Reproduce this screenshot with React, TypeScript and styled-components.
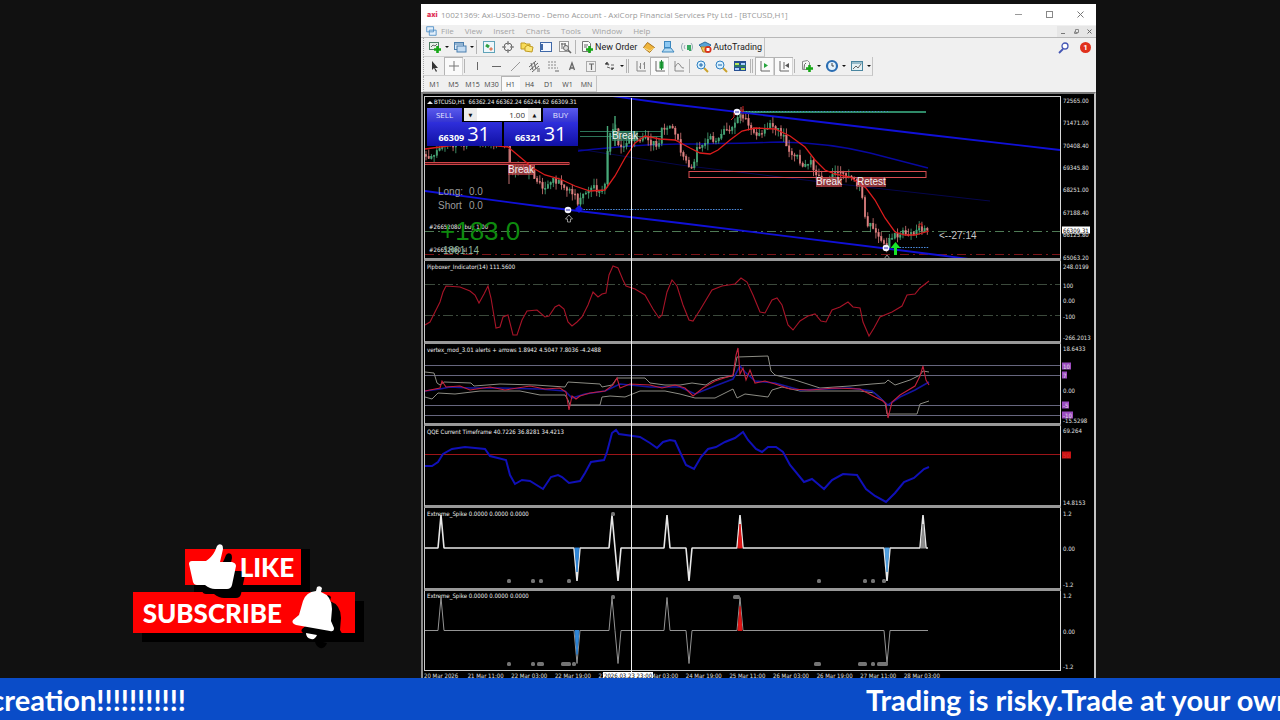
import React, { ReactNode } from "react";
import styled, { createGlobalStyle, css } from "styled-components";

const GlobalStyle = createGlobalStyle`
  *, *::before, *::after { box-sizing: border-box; }
  body { margin: 0; background: #111111; font-family: "Open Sans", "Noto Sans", sans-serif; }
  button { border: 0; padding: 0; background: none; font: inherit; color: inherit; }
`;

/* ---------- page ---------- */

const Page = styled.div`
  display: flex;
  flex-direction: column;
  height: 100vh;
  min-height: 600px;
  overflow: hidden;
`;

const Stage = styled.main`
  flex: 1;
  min-height: 0;
  display: grid;
  grid-template-columns: 421fr 675fr 184fr;
  padding-top: 4px;
`;

const Side = styled.aside`
  display: flex;
  align-items: flex-end;
  justify-content: flex-end;
  padding: 0 66px 45px 0;
  min-width: 0;
`;

const Terminal = styled.section`
  display: flex;
  flex-direction: column;
  min-width: 0;
  min-height: 0;
  background: #f0f0f0;
  color: #222222;
`;

/* ---------- call to action ---------- */

const Promo = styled.div`
  display: flex;
  flex-direction: column;
  align-items: flex-start;
  gap: 7px;
`;

const PromoButton = styled.button<{ $kind: "like" | "subscribe" }>`
  display: flex;
  align-items: center;
  background: #ff0000;
  color: #ffffff;
  box-shadow: 9px 9px 0 #000000;
  font: 900 26px/36px Lato, sans-serif;
  ${(p) =>
    p.$kind === "like"
      ? css`
          position: relative;
          z-index: 1;
          height: 36px;
          margin-left: 52px;
          padding: 0 7px 0 4px;
          gap: 3px;
          box-shadow: 9px 0 0 #000000, 9px 7px 0 #000000;
        `
      : css`
          height: 41px;
          padding: 0 19px 0 10px;
          gap: 10px;
        `}
  svg { flex: none; overflow: visible; }
`;

/* ---------- window chrome ---------- */

const TitleBar = styled.header`
  display: flex;
  align-items: center;
  height: 21px;
  padding: 0 2px 0 6px;
  gap: 4px;
  background: #ffffff;
  color: #9a9a9a;
  font-size: 8px;
  white-space: nowrap;
`;

const Brand = styled.span`
  color: #e0355a;
  font: 900 7px/8px Inter, sans-serif;
  width: 10px;
`;

const Title = styled.h1`
  margin: 0;
  flex: 1;
  font: 400 8px/12px "Open Sans", sans-serif;
`;

const WindowButton = styled.button<{ $small?: boolean }>`
  display: grid;
  place-items: center;
  width: ${(p) => (p.$small ? 13 : 27)}px;
  height: ${(p) => (p.$small ? 11 : 20)}px;
  color: #777777;
  background: ${(p) => (p.$small ? "#e6e6e6" : "none")};
`;

const MenuBar = styled.nav`
  display: flex;
  align-items: center;
  height: 13px;
  padding-left: 4px;
  border-bottom: 1px solid #b8b8b8;
  color: #a4a4a4;
  font-size: 8px;
  line-height: 12px;
`;

const MenuItem = styled.button`
  margin-left: 4px;
  margin-right: 7px;
`;

const Spacer = styled.span`
  flex: 1;
`;

const Toolbar = styled.div<{ $height: number }>`
  display: flex;
  align-items: stretch;
  height: ${(p) => p.$height}px;
  padding-left: 2px;
`;

const Strip = styled.div`
  display: flex;
  align-items: center;
  padding-left: 1px;
  border-left: 1px dotted #a8a8a8;
  border-right: 1px solid #c4c4c4;
  border-bottom: 1px solid #cfcfcf;
`;

const Tool = styled.button<{ $active?: boolean; $label?: boolean }>`
  display: flex;
  align-items: center;
  justify-content: center;
  flex: none;
  height: 100%;
  min-width: 19px;
  padding: ${(p) => (p.$label ? "0 2px" : "0")};
  gap: 1px;
  color: #1c1c1c;
  font: 400 9px/12px Roboto, sans-serif;
  ${(p) =>
    p.$active &&
    css`
      background: #fafafa;
      box-shadow: inset 1px 1px 0 #b4b4b4, inset -1px 0 0 #d4d4d4;
    `}
`;

const Caret = styled.button`
  width: 6px;
  height: 100%;
  display: grid;
  place-items: center;
  &::after {
    content: "";
    border: 2px solid transparent;
    border-top-color: #111111;
    border-bottom: 0;
  }
`;

const Divider = styled.span<{ $double?: boolean }>`
  width: ${(p) => (p.$double ? 3 : 1)}px;
  height: 14px;
  margin: 0 2px 0 1px;
  border-left: 1px solid #b4b4b4;
  border-right: ${(p) => (p.$double ? "1px solid #b4b4b4" : "0")};
`;

const Frame = styled.button<{ $active?: boolean }>`
  width: 19px;
  height: 100%;
  padding-top: 2px;
  font: 400 7px/8px "Open Sans", sans-serif;
  color: #444444;
  ${(p) =>
    p.$active &&
    css`
      background: #fafafa;
      box-shadow: inset 1px 1px 0 #b4b4b4;
    `}
`;

const Alerts = styled.button`
  display: grid;
  place-items: center;
  align-self: center;
  width: 11px;
  height: 11px;
  margin: 0 5px 0 7px;
  border-radius: 50%;
  background: #e0301c;
  color: #ffffff;
  font: 700 8px/11px Roboto, sans-serif;
`;

/* ---------- charts ---------- */

const Charts = styled.div`
  position: relative;
  flex: 1;
  min-height: 0;
  display: flex;
  flex-direction: column;
  padding: 2px 0 0 1px;
  border: solid #8c8c8c;
  border-width: 2px 2px 0 2px;
  border-top-color: #7a7a7a;
  border-right-color: #c4c4c4;
  background: #000000;
  color: #f0f0f0;
  font: 400 6px/8px "DejaVu Sans Condensed", "Noto Sans", sans-serif;
  overflow: hidden;
`;

const Panel = styled.section<{ $h: number; $first?: boolean }>`
  flex: ${(p) => `${p.$h} 1 ${p.$h}px`};
  min-height: 0;
  display: grid;
  grid-template-columns: 1fr 33px;
  &:not(:last-of-type) > :first-child { border-bottom: 3px solid #989898; }
  &:last-of-type > :first-child { border-bottom: 1px solid #c8c8c8; }
  &:first-of-type > :first-child { border-top: 1px solid #c8c8c8; }
`;

const Plot = styled.div`
  position: relative;
  border-left: 1px solid #c8c8c8;
  border-right: 1px solid #d8d8d8;
  overflow: hidden;
`;

const Canvas = styled.svg`
  position: absolute;
  inset: 0;
  width: 100%;
  height: 100%;
`;

const Scale = styled.div`
  position: relative;
`;

const ScaleMark = styled.span<{ $bg?: string; $color?: string }>`
  position: absolute;
  left: 1px;
  padding: 0 1px;
  transform: translateY(-50%);
  line-height: 7px;
  white-space: pre;
  background: ${(p) => p.$bg || "none"};
  color: ${(p) => p.$color || "#e0e0e0"};
`;

const Note = styled.span<{ $size?: number; $color?: string; $bg?: string }>`
  position: absolute;
  transform: translateY(-50%);
  white-space: pre;
  color: ${(p) => p.$color || "#f0f0f0"};
  background: ${(p) => p.$bg || "none"};
  ${(p) => p.$size && css`font: 400 ${p.$size}px/${p.$size}px "Liberation Sans", sans-serif;`}
`;

const TimeAxis = styled.div`
  position: relative;
  display: flex;
  flex: none;
  height: 7px;
  margin-right: 33px;
  overflow: hidden;
`;

const TimeMark = styled.span`
  flex: none;
  width: 6.85%;
  padding-top: 1px;
  white-space: nowrap;
  color: #e0e0e0;
`;

const TimeCursor = styled.span`
  position: absolute;
  left: 28.1%;
  top: 1px;
  padding: 0 1px;
  background: #ffffff;
  color: #000000;
`;

const Crosshair = styled.span`
  position: absolute;
  top: 4px;
  bottom: 4px;
  left: calc((100% - 33px) * 0.3255);
  width: 1px;
  background: #f0f0f0;
`;

/* ---------- one-click trade panel ---------- */

const Trade = styled.form`
  position: absolute;
  left: 2px;
  top: 11px;
  width: 151px;
  display: grid;
  grid-template-columns: 1fr 1fr;
  gap: 0 2px;
  background: #000000;
`;

const TradeTop = styled.div`
  grid-column: 1 / -1;
  display: flex;
  gap: 2px;
  height: 14px;
`;

const SideButton = styled.button`
  flex: none;
  width: 35px;
  background: linear-gradient(#5a5aec, #3434d2);
  color: #e6e6ff;
  font: 400 8px/14px "Open Sans", sans-serif;
`;

const Volume = styled.div`
  flex: 1 1 0;
  min-width: 0;
  display: flex;
  height: 13px;
  background: #ffffff;
  input {
    flex: 1 1 0;
    width: 0;
    border: 0;
    padding: 0 3px;
    text-align: right;
    background: none;
    color: #333333;
    font: 400 8px/12px "Open Sans", sans-serif;
  }
  button {
    flex: none;
    width: 13px;
    background: #ececec;
    color: #111111;
    font: 400 5px/12px "DejaVu Sans", sans-serif;
  }
`;

const Quote = styled.button`
  display: flex;
  align-items: baseline;
  justify-content: center;
  gap: 3px;
  height: 24px;
  background: linear-gradient(#2f2fdc, #1010a4);
  color: #ffffff;
  font: 700 9px/24px "Open Sans", sans-serif;
  big { font: 400 20px/24px "Open Sans", sans-serif; }
`;

/* ---------- ticker ---------- */

const Ticker = styled.footer`
  flex: none;
  display: flex;
  justify-content: space-between;
  height: 42px;
  background: #0a4cc8;
  color: #ffffff;
  font: 700 29px/44px Lato, sans-serif;
  white-space: nowrap;
  overflow: hidden;
`;

const TickerText = styled.p<{ $width: string; $end?: boolean }>`
  display: flex;
  justify-content: ${(p) => (p.$end ? "flex-end" : "flex-start")};
  width: ${(p) => p.$width};
  margin: 0;
  overflow: hidden;
`;

/* ---------- toolbar drawings ---------- */

const Icon = ({ children, size = 14 }: { children: ReactNode; size?: number }) => (
  <svg width={size} height={size} viewBox="0 0 14 14" fill="none" stroke="#666" strokeWidth="1" aria-hidden="true">
    {children}
  </svg>
);

const plus = <path d="M9.5 6v7M6 9.5h7" stroke="#16a716" strokeWidth="2.6" />;

const icons: Record<string, ReactNode> = {
  newChart: <><rect x="1.5" y="2.5" width="9" height="7" fill="#e8f1ea" stroke="#4e8064" /><path d="M3 7l2-2 2 1 2-2" />{plus}</>,
  profiles: <><rect x="1.5" y="2.5" width="9" height="7" fill="#dcebf8" stroke="#4b7fae" /><rect x="4" y="6" width="9" height="6" fill="#c4dcf2" stroke="#4b7fae" /><path d="M2 4h8" stroke="#4b7fae" /></>,
  market: <><rect x="1.5" y="1.5" width="11" height="11" fill="#eef7fb" stroke="#5fa3b8" /><path d="M4 5l3 2" stroke="#2fa040" strokeWidth="3" /><path d="M8 8l2 2" stroke="#e08060" strokeWidth="3" /></>,
  target: <><circle cx="7" cy="7" r="4" /><path d="M7 1v4M7 9v4M1 7h4M9 7h4" /></>,
  folders: <><path d="M1 3h4l1 1h4v5H1z" fill="#f8dc58" stroke="#c09a20" /><path d="M5 7l3-2 1 1 4 1-1 5-7-1z" fill="#fbe678" stroke="#c09a20" /></>,
  terminal: <><rect x="1.5" y="2.5" width="11" height="9" fill="#f4f8ff" stroke="#3f68a8" /><path d="M3 4v6" stroke="#3f68a8" strokeWidth="2" /></>,
  tester: <><rect x="1.5" y="1.5" width="9" height="10" fill="#fafafa" stroke="#999" /><path d="M3 4h5M4 3v6M7 3v5" /><circle cx="8" cy="8" r="2.5" fill="#ddd" /><path d="M10 10l3 3" strokeWidth="1.6" /></>,
  order: <><path d="M2.500 1.500h6l2 2v8h-8z" fill="#fafafa" stroke="#777" /><path d="M4 5h4M4 7h3" />{plus}</>,
  gold: <><path d="M1.500 7.500l4-5 7 5-5 5z" fill="#efb53c" stroke="#a9711a" /><path d="M2 8l6 3 4-3" stroke="#fbe08c" /></>,
  user: <><rect x="3.500" y="1.500" width="6" height="6" fill="#8dc8f2" stroke="#3d87be" /><path d="M1 12l3-4h6l3 4z" fill="#b4daf2" stroke="#3d87be" /></>,
  signal: <><path d="M3 3a6 6 0 000 8M11 3a6 6 0 010 8M5 5a3 3 0 000 4" stroke="#96aab4" /><path d="M8 5v5M10 5v6" stroke="#36a860" strokeWidth="2" /></>,
  auto: <><path d="M1 5l6-3 6 3-3 3H4z" fill="#56a3d8" stroke="#2c6e9e" /><path d="M3 7h7l-1 5H5z" fill="#f2c85c" stroke="#b38420" /><circle cx="10" cy="9.500" r="3.500" fill="#d8321e" stroke="none" /><rect x="8.500" y="8" width="3" height="3" fill="#fff" stroke="none" /></>,
  pointer: <path d="M4 2v9l2-2 2 4 1-1-2-3h3z" fill="#333" stroke="none" />,
  cross: <path d="M7 2v10M2 7h10" stroke="#777" />,
  vline: <path d="M7.500 3v8" />,
  hline: <path d="M3 7.500h9" />,
  diag: <path d="M3 12l9-9" stroke="#999" />,
  channel: <><path d="M2 8l7-6M3 11l8-7M5 13l7-6M4 4l2 7M7 3l2 7" /><path d="M10 10h3M10 12h3" /></>,
  fibo: <><path d="M2 3h9M2 6h9M2 9h10" strokeDasharray="2 1" stroke="#888" /><path d="M9 12h4" /></>,
  a: <path d="M4.500 11l2.500-7 2.500 7M5 9h4" strokeWidth="1.300" />,
  t: <><rect x="2.500" y="2.500" width="9" height="10" strokeDasharray="1 1" /><path d="M5 5h5M7.500 5v6" strokeWidth="1.200" /></>,
  arrows: <><path d="M2 5l2-2 2 3zM8 9l3 0-2 2z" fill="#333" /><path d="M4 8l3 1M8 6h3" /></>,
  bars: <path d="M3 2v10h9M6.500 4v6M10.500 3v7M5 8h1M9 5h1" stroke="#888" />,
  candles: <><path d="M3 2v10h9" /><rect x="7" y="3" width="3" height="6" fill="#2cc04a" stroke="#178a2e" /><path d="M8.500 1v10" stroke="#178a2e" /></>,
  line: <path d="M3 2v10h9M3 8q3-6 5-2t4 3" stroke="#888" />,
  zoomIn: <><path d="M9 9l4 4" stroke="#c9a12c" strokeWidth="2" /><circle cx="6" cy="6" r="4" fill="#d8f0ff" stroke="#2f7fc0" /><path d="M4 6h4M6 4v4" stroke="#1f66a8" /></>,
  zoomOut: <><path d="M9 9l4 4" stroke="#c9a12c" strokeWidth="2" /><circle cx="6" cy="6" r="4" fill="#d8f0ff" stroke="#2f7fc0" /><path d="M4 6h4" stroke="#1f66a8" /></>,
  tiles: <g stroke="none"><path d="M1 2h12v10H1z" fill="#264f92" /><path d="M2 4h4v2H2zM8 9h4v2H8z" fill="#b8e85a" /><path d="M8 4h4v2H8zM2 9h4v2H2z" fill="#a8d0ff" /><path d="M1 7h12" stroke="#2d9d3b" /></g>,
  scroll: <><path d="M3 2v10h9" /><path d="M6 4v5l4-2.500z" fill="#27a53e" stroke="none" /></>,
  shift: <><path d="M3 2v10h9M7 3v7" /><path d="M12 4v5L8 6.500z" fill="#555" stroke="none" /></>,
  indicator: <><path d="M2.500 2.500l5-1 2 2v7h-7z" fill="#f4f4f4" stroke="#888" /><path d="M6 4q-2 0-2 6" />{plus}</>,
  clock: <><circle cx="7" cy="7" r="5" fill="#e4f2fc" stroke="#2a6db2" strokeWidth="2.200" /><path d="M7 4v3h2" stroke="#444" /></>,
  template: <><rect x="1.500" y="2.500" width="11" height="9" fill="#e4f1f4" stroke="#4a86a0" /><path d="M2 4h10" stroke="#4a86a0" /><path d="M3 10l3-3 2 2 3-4" /></>,
  search: <><circle cx="8" cy="5" r="3" stroke="#4456b4" strokeWidth="1.300" fill="#fff" /><path d="M6 8l-4 4" stroke="#4456b4" strokeWidth="1.800" /></>,
};

type ToolSpec = { icon?: string; caret?: boolean; active?: boolean; text?: string; sep?: 1 | 2; name?: string };

const mainTools: ToolSpec[] = [
  { icon: "newChart", caret: true }, { icon: "profiles", caret: true }, { sep: 1 },
  { icon: "market" }, { icon: "target" }, { icon: "folders" }, { icon: "terminal" }, { icon: "tester" }, { sep: 1 },
  { icon: "order", text: "New Order" }, { icon: "gold" }, { icon: "user" }, { icon: "signal" },
  { icon: "auto", text: "AutoTrading" },
];

const drawTools: ToolSpec[] = [
  { icon: "pointer" }, { icon: "cross", active: true }, { sep: 1 }, { icon: "vline" }, { icon: "hline" },
  { icon: "diag" }, { icon: "channel" }, { icon: "fibo" }, { icon: "a" }, { icon: "t" }, { icon: "arrows", caret: true },
  { sep: 2 }, { icon: "bars" }, { icon: "candles", active: true }, { icon: "line" }, { sep: 1 },
  { icon: "zoomIn" }, { icon: "zoomOut" }, { icon: "tiles" }, { sep: 2 },
  { icon: "scroll", active: true }, { icon: "shift", active: true }, { sep: 1 },
  { icon: "indicator", caret: true }, { icon: "clock", caret: true }, { icon: "template", caret: true },
];

const Tools = ({ items }: { items: ToolSpec[] }) => (
  <>
    {items.map((t, i) =>
      t.sep ? (
        <Divider key={i} $double={t.sep === 2} />
      ) : (
        <React.Fragment key={i}>
          <Tool type="button" $active={t.active} $label={!!t.text} aria-label={t.text ? undefined : t.icon}>
            <Icon>{icons[t.icon as string]}</Icon>
            {t.text}
          </Tool>
          {t.caret && <Caret type="button" aria-label={`${t.icon} options`} />}
        </React.Fragment>
      )
    )}
  </>
);

/* ---------- chart data ---------- */

const X0 = 425;
const W = 635;

const price: number[][] = [
  [425,158],[430,156],[440,148],[470,142],[500,143],[508,146],[510,174],[515,170],[530,172],[535,177],[541,184],[544,190],[552,179],
  [560,183],[568,193],[573,191],[578,202],[585,191],[592,187],[593,179],[596,195],[600,188],[606,184],[608,142],
  [612,132],[617,126],[618,148],[622,146],[628,140],[640,137],[650,141],[657,148],[662,129],[670,128],[676,132],
  [680,153],[685,160],[689,169],[693,165],[697,150],[704,143],[711,137],[716,142],[722,132],[730,130],[735,123],
  [741,113],[748,125],[752,134],[757,136],[765,132],[770,125],[778,130],[785,138],[789,152],[795,154],[800,164],
  [805,168],[811,163],[817,174],[822,182],[828,178],[833,175],[843,174],[850,180],[858,183],[862,196],[866,222],
  [872,228],[878,234],[883,240],[887,245],[892,237],[898,236],[903,230],[910,236],[915,232],[921,227],[929,230],
];

const priceAt = (x: number) => {
  const i = Math.max(1, price.findIndex((p) => p[0] >= x));
  const [a, b] = [price[i - 1], price[i]];
  return a[1] + ((b[1] - a[1]) * (x - a[0])) / (b[0] - a[0]);
};

const noise = (n: number) => {
  const v = Math.sin(n * 127.1) * 43758.5453;
  return v - Math.floor(v);
};

const candles = Array.from({ length: 186 }, (_, i) => {
  const x = 426 + i * 2.71;
  const open = priceAt(Math.max(425, x - 2.71)) + (noise(i) - 0.5) * 7;
  const close = priceAt(Math.min(929, x)) + (noise(i + 1) - 0.5) * 7;
  const top = Math.min(open, close);
  const bottom = Math.max(open, close);
  return { x, top, bottom, hi: top - noise(i + 300) * 7, lo: bottom + noise(i + 600) * 7, up: close < open };
});

const average = "425,149 440,147 470,143 508,147 520,157 533,168 545,175 560,179 575,186 590,191 605,190 615,176 625,158 635,143 645,136 660,139 675,140 690,148 700,153 710,154 718,150 730,140 742,131 755,128 775,129 790,136 805,147 815,160 825,170 835,174 850,177 866,188 875,200 885,218 895,232 905,235 915,235 929,231";
const pip = "425,325 430,322 435,312 440,302 443,292 446,286 460,287 470,291 475,295 479,303 484,294 488,286 491,298 496,328 500,327 503,317 508,315 513,335 517,335 522,320 527,311 537,310 545,317 549,316 555,307 559,305 564,309 568,322 572,326 577,322 582,317 588,305 593,292 598,297 602,294 606,293 609,275 613,266 618,268 623,280 626,286 635,289 645,295 653,309 659,318 662,315 667,292 672,280 677,286 683,305 689,320 693,321 700,310 712,290 722,286 735,284 741,278 747,282 753,295 760,312 765,313 772,300 777,298 782,305 788,325 793,330 800,321 808,316 815,314 821,321 826,322 832,310 840,307 848,302 853,307 860,308 863,322 869,336 874,328 880,317 892,312 902,306 907,295 915,294 920,288 929,281";
const bandUp = "425,372 434,373 437,383 440,385 444,382 471,383 474,386 500,384 535,385 565,387 568,382 600,384 602,387 612,385 617,378 645,378 650,383 665,385 680,385 692,383 706,385 712,381 720,378 733,376 737,357 768,356 771,371 775,375 795,380 820,388 850,386 872,384 885,383 888,380 895,385 910,380 920,375 923,371 929,372";
const bandDown = "425,397 432,399 438,393 455,394 480,391 520,391 540,395 565,395 568,400 570,405 600,405 602,397 610,396 625,397 640,391 665,391 680,394 695,398 715,398 733,389 737,398 745,394 768,397 772,390 782,387 800,391 860,391 875,393 885,402 887,414 917,414 920,404 929,401";
const vertexRed = "425,391 440,388 442,381 446,387 460,386 470,390 490,387 505,390 530,386 545,389 560,388 566,392 569,410 572,396 576,399 580,396 590,393 605,391 613,385 617,378 620,388 630,384 650,385 662,388 675,385 685,388 693,396 703,388 715,381 733,375 736,355 738,348 740,374 743,368 746,380 750,370 755,383 765,381 775,384 790,389 810,390 835,388 860,389 875,397 883,401 886,404 888,418 892,402 900,395 915,386 920,376 923,366 926,380 929,385";
const vertexBlue = "425,391 440,389 450,387 470,388 500,388 540,389 565,391 572,398 585,394 605,391 620,384 650,387 680,387 695,394 715,386 733,379 740,366 745,372 755,381 775,383 800,390 850,388 872,391 888,405 900,397 915,390 929,382";
const qqe = "425,466 432,466 438,462 443,454 452,449 465,447 485,449 490,456 506,460 510,475 515,484 522,480 530,481 543,489 551,477 558,475 562,477 569,483 580,481 585,473 591,462 604,460 607,452 612,433 616,430 619,434 640,437 650,443 657,448 663,442 670,440 675,441 680,452 686,465 694,469 701,457 708,449 716,447 725,442 735,438 743,432 748,440 756,449 762,452 768,447 776,447 783,452 790,465 804,482 812,479 818,484 824,489 832,480 843,474 857,475 866,489 875,496 886,502 895,493 904,482 914,478 924,469 929,467";

type Spike = { x: number; dir: 1 | -1; fill?: string };

const spikes: Spike[] = [
  { x: 441, dir: 1 }, { x: 577, dir: -1, fill: "#2f86d8" }, { x: 612, dir: 1 }, { x: 618, dir: -1 }, { x: 667, dir: 1 },
  { x: 689, dir: -1 }, { x: 740, dir: 1, fill: "#e01414" },
];

const SpikeDrawing = ({ base, items, stroke, width, dots }: { base: number; items: Spike[]; stroke: string; width: number; dots: number[][] }) => (
  <>
    <polyline
      points={`425,${base} ${items.map((s) => `${s.x - 3},${base} ${s.x},${base - s.dir * 33} ${s.x + 3},${base}`).join(" ")} 928,${base}`}
      fill="none" stroke={stroke} strokeWidth={width} strokeLinejoin="bevel"
    />
    {items.filter((s) => s.fill).map((s) => (
      <path key={s.x} d={`M${s.x - 2} ${base}L${s.x} ${base - s.dir * 24}L${s.x + 2} ${base}z`} fill={s.fill} stroke={s.fill} strokeWidth="1" />
    ))}
    {dots.map(([x, y, w]) => (
      <rect key={`${x}-${y}`} x={x} y={y} width={w} height="4" rx="1.500" fill="#747474" />
    ))}
  </>
);

/* ---------- chart panel ---------- */

type Mark = { y: number; text: string; bg?: string; color?: string };

const ChartPanel = ({ y, h, border, marks, children, notes }: { y: number; h: number; border: number; marks: Mark[]; children: ReactNode; notes: ReactNode }) => (
  <Panel $h={h + border}>
    <Plot>
      <Canvas viewBox={`${X0} ${y} ${W} ${h}`} preserveAspectRatio="none">{children}</Canvas>
      {notes}
    </Plot>
    <Scale>
      {marks.map((m) => (
        <ScaleMark key={m.text + m.y} $bg={m.bg} $color={m.color} style={{ top: `${((m.y - y) / (h + border)) * 100}%` }}>
          {m.text}
        </ScaleMark>
      ))}
    </Scale>
  </Panel>
);

const place = (x: number, y: number, y0: number, h: number) => ({
  left: `${((x - X0) / W) * 100}%`,
  top: `${((y - y0) / h) * 100}%`,
});

const MainNote = ({ x, y, ...rest }: { x: number; y: number; $size?: number; $color?: string; $bg?: string; children: ReactNode }) => (
  <Note style={place(x, y, 97, 161)} {...rest} />
);

const Pivot = ({ x, y }: { x: number; y: number }) => (
  <g><circle cx={x} cy={y} r="3.300" fill="#f4f4ff" /><path d={`M${x - 2} ${y}h4`} stroke="#3030a0" /></g>
);

const times = ["20 Mar 2026", "21 Mar 11:00", "22 Mar 03:00", "22 Mar 19:00", "23 Mar 11:00", "24 Mar 03:00", "24 Mar 19:00", "25 Mar 11:00", "26 Mar 03:00", "26 Mar 19:00", "27 Mar 11:00", "28 Mar 03:00"];

const violet = "#9c4cc0";

export default function App() {
  return (
    <Page>
      <GlobalStyle />
      <Stage>
        <Side>
          <Promo>
            <PromoButton type="button" $kind="like">
              <svg width="48" height="46" viewBox="0 0 48 46" aria-hidden="true">
                {["#000", "#fff"].map((c, i) => (
                  <path key={c} transform={i ? undefined : "translate(9 9)"} fill={c}
                    d="M3 17h14q6-4 9-10l2-5q2-3 5-1 1 1 1 4l-3 13h12q4 1 4 4l-4 19q-1 4-5 4H26q-5 0-10-4H8q-3 0-4-3L0 20q0-3 3-3z" />
                ))}
              </svg>
              LIKE
            </PromoButton>
            <PromoButton type="button" $kind="subscribe">
              SUBSCRIBE
              <svg width="44" height="54" viewBox="0 0 44 54" aria-hidden="true">
                <g transform="translate(9 9)" fill="#000">
                  <path d="M25 1q3-2 5 1l-1 4q11 4 11 17l-1 12 4 7q0 4-4 3L4 39q-5-2-3-5l6-5 4-14Q14 6 24 5z" />
                  <path d="M14 45l12 3q-2 6-7 5-5-2-5-8z" />
                </g>
                <path d="M12 41l22 4-8 8-12-6z" fill="#000" />
                <g fill="#fff">
                  <path d="M25 1q3-2 5 1l-1 4q11 4 11 17l-1 12 3 7q0 4-4 3L4 39q-5-2-3-5l6-5 4-14Q14 6 24 5z" />
                  <path d="M14 47l11 2q-2 5-6 4-5-1-5-6z" />
                </g>
              </svg>
            </PromoButton>
          </Promo>
        </Side>

        <Terminal>
          <TitleBar>
            <Brand>axi</Brand>
            <Title>10021369: Axi-US03-Demo - Demo Account - AxiCorp Financial Services Pty Ltd - [BTCUSD,H1]</Title>
            <WindowButton type="button" aria-label="Minimize"><svg width="9" height="9"><path d="M1 4.500h7" stroke="#999" /></svg></WindowButton>
            <WindowButton type="button" aria-label="Maximize"><svg width="9" height="9"><rect x="1.500" y="1.500" width="6" height="6" fill="none" stroke="#888" /></svg></WindowButton>
            <WindowButton type="button" aria-label="Close"><svg width="9" height="9"><path d="M1.500 1.500l6 6M7.500 1.500l-6 6" stroke="#777" /></svg></WindowButton>
          </TitleBar>

          <MenuBar>
            <svg width="12" height="12" viewBox="0 0 14 14" aria-hidden="true">
              <path d="M2 2h8v6H2zM5 6h8v6H5z" fill="#e4f0fb" stroke="#4b8cc4" />
            </svg>
            {["File", "View", "Insert", "Charts", "Tools", "Window", "Help"].map((m) => (
              <MenuItem type="button" key={m}>{m}</MenuItem>
            ))}
            <Spacer />
            <WindowButton type="button" $small aria-label="Minimize chart"><svg width="7" height="7"><path d="M1 5.500h4" stroke="#777" /></svg></WindowButton>
            <WindowButton type="button" $small aria-label="Restore chart"><svg width="7" height="7"><path d="M2.500 1.500h3v3h-3zM1.500 3.500v2h3" fill="none" stroke="#888" /></svg></WindowButton>
            <WindowButton type="button" $small aria-label="Close chart"><svg width="7" height="7"><path d="M1.500 1.500l4 4M5.500 1.500l-4 4" stroke="#666" /></svg></WindowButton>
          </MenuBar>

          <Toolbar $height={19}>
            <Strip><Tools items={mainTools} /></Strip>
            <Spacer />
            <Tool type="button" aria-label="Search"><Icon>{icons.search}</Icon></Tool>
            <Alerts type="button" aria-label="1 alert">1</Alerts>
          </Toolbar>
          <Toolbar $height={19}>
            <Strip><Tools items={drawTools} /></Strip>
          </Toolbar>
          <Toolbar $height={16}>
            <Strip>
              {["M1", "M5", "M15", "M30", "H1", "H4", "D1", "W1", "MN"].map((f) => (
                <Frame type="button" key={f} $active={f === "H1"}>{f}</Frame>
              ))}
            </Strip>
          </Toolbar>

          <Charts>
            <ChartPanel
              y={97} h={161} border={4}
              marks={[
                { y: 101, text: "72565.00" }, { y: 123, text: "71471.00" }, { y: 146, text: "70408.40" }, { y: 168, text: "69345.80" },
                { y: 190, text: "68251.00" }, { y: 213, text: "67188.40" }, { y: 235, text: "66125.80" },
                { y: 231, text: "66309.31", bg: "#ffffff", color: "#000000" }, { y: 258, text: "65063.20" },
              ]}
              notes={
                <>
                  <MainNote x={434} y={102}>{"BTCUSD,H1  66362.24 66362.24 66244.62 66309.31"}</MainNote>
                  <MainNote x={612} y={136} $size={10} $bg="rgba(60,150,115,.65)">Break</MainNote>
                  <MainNote x={508} y={170} $size={10} $bg="rgba(190,70,75,.75)">Break</MainNote>
                  <MainNote x={816} y={182} $size={10} $bg="rgba(190,70,75,.75)">Break</MainNote>
                  <MainNote x={857} y={182} $size={10} $bg="rgba(190,70,75,.75)">Retest</MainNote>
                  <MainNote x={438} y={192} $size={10} $color="#9c9c9c">Long:</MainNote>
                  <MainNote x={469} y={192} $size={10} $color="#9c9c9c">0.0</MainNote>
                  <MainNote x={438} y={206} $size={10} $color="#9c9c9c">Short</MainNote>
                  <MainNote x={469} y={206} $size={10} $color="#9c9c9c">0.0</MainNote>
                  <MainNote x={429} y={227}>{"#26652080  buy 1.00"}</MainNote>
                  <MainNote x={440} y={231} $size={26} $color="#0e8a0e">+183.0</MainNote>
                  <MainNote x={429} y={250}>#26652080 sl</MainNote>
                  <MainNote x={443} y={251} $size={10} $color="#8cb49c">1861.14</MainNote>
                  <MainNote x={939} y={236} $size={10} $color="#c8c8c8">{"<--27:14"}</MainNote>
                  <Trade onSubmit={(e) => e.preventDefault()}>
                    <TradeTop>
                      <SideButton type="button">SELL</SideButton>
                      <Volume>
                        <button type="button" aria-label="Decrease volume">▼</button>
                        <input aria-label="Volume" defaultValue="1.00" />
                        <button type="button" aria-label="Increase volume">▲</button>
                      </Volume>
                      <SideButton type="button">BUY</SideButton>
                    </TradeTop>
                    <Quote type="button">66309<big>31</big></Quote>
                    <Quote type="button">66321<big>31</big></Quote>
                  </Trade>
                </>
              }
            >
              <path d="M427 104l3-3 3 3z" fill="#f0f0f0" />
              <path d="M425 231.500H1060" stroke="#4f7a55" strokeDasharray="9 4 2 4" />
              <path d="M425 254.500H1060" stroke="#7c1418" strokeDasharray="9 4 2 4" />
              <path d="M578 149L680 165L830 183L990 201" fill="none" stroke="#06064c" />
              <path d="M578 151Q640 144 680 144T780 142Q830 143 870 153L928 168" fill="none" stroke="#0808a0" strokeWidth="1.300" />
              <path d="M580 131.500H662M580 136.500H662" stroke="#2c7458" />
              {candles.map((c) => (
                <g key={c.x} stroke={c.up ? "#48a878" : "#d87878"} fill={c.up ? "#48a878" : "#e08888"}>
                  <path d={`M${c.x} ${c.hi}V${c.lo}`} strokeWidth=".8" />
                  <rect x={c.x - 0.7} y={c.top} width="1.400" height={Math.max(1, c.bottom - c.top)} strokeWidth=".5" />
                </g>
              ))}
              <path d="M509 149V184M741 121V107" stroke="#c07070" strokeWidth="1" />
              <path d="M607.500 184V126M615 146V116" stroke="#48a878" strokeWidth="1.400" />
              <rect x="420" y="162.500" width="149" height="2" fill="#501014" stroke="#cc4448" />
              <rect x="689" y="171.500" width="237" height="6" fill="none" stroke="#d84c50" />
              <polyline points={average} fill="none" stroke="#dc1c1c" strokeWidth="1.300" />
              <path d="M742 112H926" stroke="#2f8a68" strokeWidth="2" />
              <path d="M612 96L670 104L930 135L1060 150M425 191L545 207L680 223L930 254L977 260" fill="none" stroke="#1010d8" strokeWidth="1.800" />
              <path d="M578 209.500H743M897 247.500H929" stroke="#4c8ce0" strokeWidth="1.200" strokeDasharray="1.500 1.200" />
              <path d="M740 111.500H890" stroke="#4c8ce0" strokeDasharray="1 2" strokeWidth=".8" />
              <path d="M579 205l4 4-4 4-4-4z" fill="#1414e0" />
              <Pivot x={568} y={210} />
              <Pivot x={737} y={112} />
              <Pivot x={886} y={248} />
              <path d="M569 215l3.500 4h-2v3h-3v-3h-2z" fill="#000" stroke="#b0b0b0" strokeWidth=".8" />
              <path d="M887 255l3 4h-6z" fill="#000" stroke="#b0b0b0" strokeWidth=".8" />
              <path d="M895.500 242l5 6h-3.500v7h-3v-7h-3.500z" fill="#18e428" />
              <path d="M731 120l3-3v-4M743 106v6l-3-2M919 228v-4h3v3" fill="none" stroke="#d01c1c" />
            </ChartPanel>

            <ChartPanel
              y={261} h={80} border={3}
              marks={[{ y: 266, text: "248.0199" }, { y: 285, text: "100" }, { y: 300, text: "0.00" }, { y: 316, text: "-100" }, { y: 337, text: "-266.2013" }]}
              notes={<Note style={place(427, 267, 261, 80)}>Pipboxer_Indicator(14) 111.5600</Note>}
            >
              <path d="M425 284.500H1060M425 315.500H1060" stroke="#3c4a3c" strokeDasharray="10 3 2 3" />
              <polyline points={pip} fill="none" stroke="#a81428" strokeWidth="1.100" />
            </ChartPanel>

            <ChartPanel
              y={344} h={79} border={3}
              marks={[
                { y: 348, text: "18.6433" }, { y: 366, text: "10", bg: violet }, { y: 375, text: "7", bg: violet }, { y: 390, text: "0.00" },
                { y: 405, text: "-5", bg: violet }, { y: 415, text: "-10", bg: violet }, { y: 420, text: "-15.5298" },
              ]}
              notes={<Note style={place(427, 350, 344, 79)}>vertex_mod_3.01 alerts + arrows 1.8942 4.5047 7.8036 -4.2488</Note>}
            >
              <path d="M425 365.500H1060M425 375.500H1060M425 405.500H1060M425 415.500H1060" stroke="#66667e" />
              <polyline points={bandUp} fill="none" stroke="#8c8c84" />
              <polyline points={bandDown} fill="none" stroke="#8c8c84" />
              <polyline points={vertexBlue} fill="none" stroke="#1414a0" strokeWidth="1.600" />
              <polyline points={vertexRed} fill="none" stroke="#c4203c" strokeWidth="1.100" />
            </ChartPanel>

            <ChartPanel
              y={426} h={79} border={3}
              marks={[{ y: 430, text: "69.264" }, { y: 455, text: "50", bg: "#c81414", color: "#e03030" }, { y: 502, text: "14.8153" }]}
              notes={<Note style={place(427, 432, 426, 79)}>QQE Current Timeframe 40.7226 36.8281 34.4213</Note>}
            >
              <path d="M425 454.500H1060" stroke="#9c1418" />
              <polyline points={qqe} fill="none" stroke="#1010b8" strokeWidth="2" />
            </ChartPanel>

            <ChartPanel
              y={508} h={80} border={3}
              marks={[{ y: 513, text: "1.2" }, { y: 548, text: "0.00" }, { y: 584, text: "-1.2" }]}
              notes={<Note style={place(427, 514, 508, 80)}>Extreme_Spike 0.0000 0.0000 0.0000</Note>}
            >
              <SpikeDrawing
                base={548} stroke="#e8e8e8" width={1.6}
                items={[...spikes, { x: 887, dir: -1, fill: "#4f9fe0" }, { x: 923, dir: 1, fill: "#8c8c8c" }]}
                dots={[[507, 579, 4], [531, 579, 4], [539, 579, 4], [567, 579, 4], [611, 512, 4], [817, 579, 4], [863, 579, 4], [871, 579, 4], [882, 579, 4]]}
              />
            </ChartPanel>

            <ChartPanel
              y={591} h={79} border={1}
              marks={[{ y: 595, text: "1.2" }, { y: 631, text: "0.00" }, { y: 666, text: "-1.2" }]}
              notes={<Note style={place(427, 596, 591, 79)}>Extreme_Spike 0.0000 0.0000 0.0000</Note>}
            >
              <SpikeDrawing
                base={630.5} stroke="#949494" width={1}
                items={[...spikes, { x: 887, dir: -1 }]}
                dots={[[507, 662, 4], [531, 662, 4], [537, 662, 7], [561, 662, 10], [572, 662, 4], [611, 595, 4], [733, 595, 7], [814, 662, 7], [858, 662, 9], [871, 662, 4], [877, 662, 11]]}
              />
            </ChartPanel>

            <TimeAxis>
              {times.map((t) => <TimeMark key={t}>{t}</TimeMark>)}
              <TimeCursor>2026.03.23 23:00</TimeCursor>
            </TimeAxis>
            <Crosshair />
          </Charts>
        </Terminal>
      </Stage>

      <Ticker>
        <TickerText $width="186px" $end>creation!!!!!!!!!!!</TickerText>
        <TickerText $width="414px">Trading is risky.Trade at your own risk</TickerText>
      </Ticker>
    </Page>
  );
}
